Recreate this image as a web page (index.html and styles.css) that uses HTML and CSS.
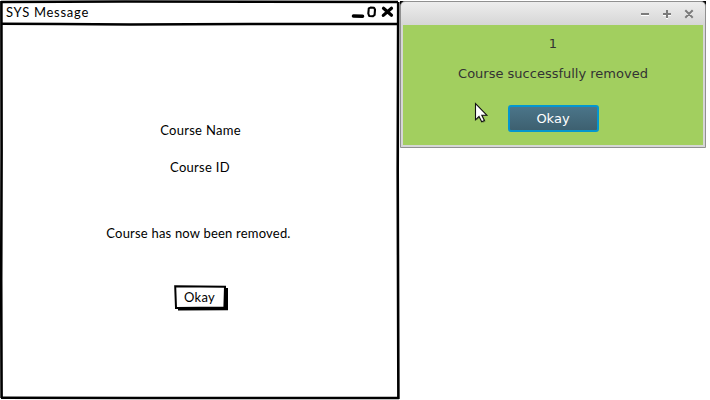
FILE: index.html
```html
<!DOCTYPE html>
<html lang="en">
<head>
<meta charset="utf-8">
<title>SYS Message</title>
<link rel="stylesheet" href="styles.css">
</head>
<body>
<main class="screens">
  <section class="sketch">
    <svg class="sketch-frame" width="400" height="400" viewBox="0 0 400 400" fill="none" stroke="#000" aria-hidden="true">
      <path d="M1 2L125 1.5L260 1.8L398 2" stroke-width="2.5"/>
      <path d="M1.4 1L1.6 150L1.2 280L1.6 398" stroke-width="2.6"/>
      <path d="M398.2 2L397.7 170L398.4 399" stroke-width="2.6"/>
      <path d="M1 23.8L60 24L130 24.4L250 24L398 24.1" stroke-width="2.5"/>
      <path d="M1 397.7L140 398L399 398" stroke-width="2.6"/>
    </svg>
    <header class="sketch-bar">
      <span class="sketch-title">SYS Message</span>
      <svg class="sketch-controls" width="44" height="14" viewBox="0 0 44 14" fill="none" stroke="#000" aria-hidden="true">
        <path d="M3.5 11L12.5 11.3" stroke-width="3.6" stroke-linecap="round"/>
        <path d="M18.8 3.4L20.5 2.6L24 2.8L25 4.5L24.6 10L23 11.2L19.2 11L18.3 8.5Z" stroke-width="2.1" stroke-linejoin="round"/>
        <path d="M33.5 3.2L41.5 10.2M41.5 3.2L33.3 10.4" stroke-width="3.2" stroke-linecap="round"/>
      </svg>
    </header>
    <div class="sketch-body">
      <p class="line name">Course Name</p>
      <p class="line id">Course ID</p>
      <p class="line note">Course has now been removed.</p>
      <button class="sketch-button">
        <svg class="button-outline" width="55" height="26" viewBox="0 0 55 26" aria-hidden="true">
          <path d="M4 3L54 3L54 25.2L4 25.6Z"/>
          <path d="M1.2 1.2L51 1.7L50.4 22.4L2 23Z" fill="#fff" stroke="#000" stroke-width="2"/>
        </svg>
        <span class="button-text">Okay</span>
      </button>
    </div>
  </section>
  <div class="dialog-backdrop">
  <section class="dialog">
    <header class="dialog-bar">
      <svg width="56" height="12" viewBox="0 0 56 12" fill="none" aria-hidden="true">
        <path d="M3 7H11M25 7H33M29 3V11M48 3.5L54 9.5M54 3.5L48 9.5" stroke="#fff" stroke-width="2"/>
        <path d="M3 6H11M25 6H33M29 2V10M47.3 2.3L54.7 9.7M54.7 2.3L47.3 9.7" stroke="#7b7b7b" stroke-width="2"/>
      </svg>
    </header>
    <div class="dialog-body">
      <p class="count">1</p>
      <p class="status">Course successfully removed</p>
      <button class="okay">Okay</button>
      <svg class="pointer" width="16" height="24" viewBox="0 0 16 24" aria-hidden="true">
        <path d="M2.5 2V18.5L6 15.2L8.8 21L11.7 19.6L9 14H14Z" fill="#0004"/>
        <path d="M1.5 1.5V17.8L5 14.5L7.7 19.8L10.4 18.5L7.8 13.2H12.8Z" fill="#fff" stroke="#111" stroke-width="1.1"/>
      </svg>
    </div>
  </section>
  </div>
</main>
</body>
</html>
```
FILE: styles.css
```css
* { box-sizing: border-box; }
body { margin: 0; background: #fff; overflow: hidden; }
p { margin: 0; }
button { margin: 0; padding: 0; border: 0; background: none; }

.screens { display: flex; align-items: flex-start; width: 710px; height: 400px; }

.sketch {
  position: relative;
  width: 400px;
  height: 400px;
  font: 13px/18px Lato, "Liberation Sans", sans-serif;
  color: #000;
}
.sketch-frame { position: absolute; inset: 0; }
.sketch-bar {
  display: flex;
  justify-content: space-between;
  align-items: center;
  height: 24px;
  padding: 0 6px;
}
.sketch-title { letter-spacing: 0.72px; }
.sketch-body {
  display: flex;
  flex-direction: column;
  align-items: center;
  padding: 97px 0 0;
}
.line { height: 18px; white-space: nowrap; letter-spacing: 0.3px; }
.name { margin-left: 1px; }
.id { margin-top: 19px; }
.note { margin: 48px 3px 0 0; letter-spacing: 0.2px; }
.sketch-button {
  position: relative;
  width: 55px;
  height: 26px;
  margin: 43px 0 0 3px;
  padding: 0 4px 3px 0;
  font: inherit;
  letter-spacing: 0.3px;
  color: #000;
}
.button-outline { position: absolute; left: 0; top: 0; }
.button-text { position: relative; }

.dialog-backdrop {
  margin-top: 1px;
  background: linear-gradient(#000 5px, transparent 5px);
}
.dialog {
  width: 306px;
  height: 147px;
  border: 1px solid #909090;
  border-radius: 5px 5px 0 0;
  padding: 0 2px 2px;
  background: #d6d6d6 linear-gradient(#ededed, #d6d6d6 23px);
  font: 13px/16px "DejaVu Sans", sans-serif;
  color: #333;
}
.dialog-bar {
  display: flex;
  justify-content: flex-end;
  align-items: center;
  height: 23px;
  padding-right: 9px;
}
.dialog-body {
  position: relative;
  display: flex;
  flex-direction: column;
  align-items: center;
  height: 120px;
  padding-top: 11px;
  background: #a2cf5f;
}
.status { margin-top: 14px; white-space: nowrap; }
.okay {
  width: 91px;
  height: 27px;
  margin-top: 23px;
  border: 2px solid #0496cf;
  border-radius: 3px;
  background: linear-gradient(#4b7589, #3d6070);
  font: inherit;
  color: #fff;
}
.pointer { position: absolute; left: 71px; top: 77px; }
```
